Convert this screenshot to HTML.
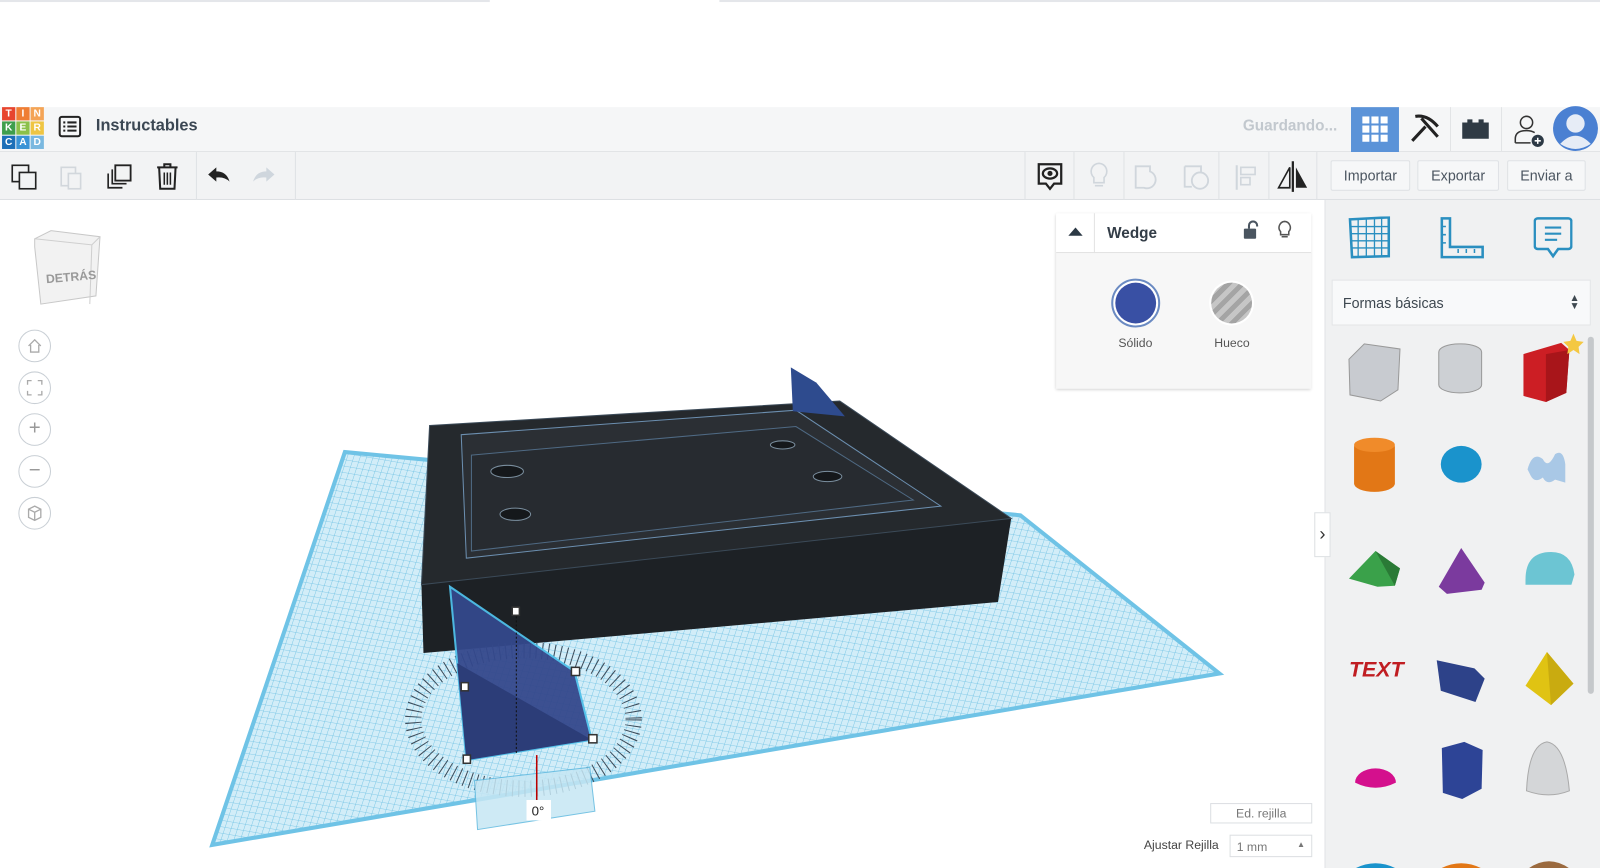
<!DOCTYPE html>
<html><head><meta charset="utf-8"><style>
*{margin:0;padding:0;box-sizing:border-box}
body{width:1600px;height:868px;overflow:hidden;background:#fff;font-family:"Liberation Sans",sans-serif}
#w{width:1568px;height:851px;position:relative;transform:scale(1.0204);transform-origin:0 0}
.a{position:absolute}
.hdr{left:0;top:105px;width:1568px;height:44px;background:#f5f6f7;border-bottom:1px solid #e2e4e6}
.tb{left:0;top:149px;width:1568px;height:47px;background:#f2f3f4;border-bottom:1px solid #dde0e3}
.btn{top:157px;height:30px;border:1px solid #dfe2e5;background:#f6f7f8;font-size:14px;color:#4b5560;text-align:center;line-height:28px;border-radius:2px}
.sep{width:1px;background:#dfe2e5;top:149px;height:47px}
.lg{width:13px;height:13px;color:#fff;font-size:10px;font-weight:bold;text-align:center;line-height:13px}
</style></head><body><div id="w">
<div class="a" style="left:0;top:0;width:480px;height:2px;background:#e4e6ea"></div>
<div class="a" style="left:705px;top:0;width:863px;height:2px;background:#e4e6ea"></div>
<div class="a hdr"></div>
<div class="a" style="left:2px;top:105px;display:grid;grid-template-columns:13px 13px 13px;gap:1px">
<div class="lg" style="background:#e7452e">T</div><div class="lg" style="background:#ef7e34">I</div><div class="lg" style="background:#f4a456">N</div>
<div class="lg" style="background:#3f9e4c">K</div><div class="lg" style="background:#8cc04a">E</div><div class="lg" style="background:#efc543">R</div>
<div class="lg" style="background:#1c6fb8">C</div><div class="lg" style="background:#3a93d6">A</div><div class="lg" style="background:#7ab8e0">D</div></div>
<svg class="a" style="left:57px;top:113px" width="24" height="22"><rect x="1.5" y="1.5" width="20" height="19" rx="2" fill="none" stroke="#222" stroke-width="2"/><path d="M5 7h2M9 7h9M5 11h2M9 11h9M5 15h2M9 15h9" stroke="#222" stroke-width="2"/></svg>
<div class="a" style="left:94px;top:115px;font-size:16px;font-weight:bold;color:#3b4753">Instructables</div>
<div class="a" style="left:1218px;top:115px;font-size:15px;color:#c2c8ce;font-weight:bold">Guardando...</div>
<div class="a" style="left:1324px;top:105px;width:47px;height:44px;background:#5b93d8"></div>
<svg class="a" style="left:1335px;top:114px" width="25" height="25"><g fill="#fff"><rect x="0" y="0" width="7" height="7"/><rect x="9" y="0" width="7" height="7"/><rect x="18" y="0" width="7" height="7"/><rect x="0" y="9" width="7" height="7"/><rect x="9" y="9" width="7" height="7"/><rect x="18" y="9" width="7" height="7"/><rect x="0" y="18" width="7" height="7"/><rect x="9" y="18" width="7" height="7"/><rect x="18" y="18" width="7" height="7"/></g></svg>
<svg class="a" style="left:1381px;top:110px" width="32" height="32"><path d="M6 4 Q18 2 28 14 M12 6 L28 24 M16 14 L3 28" stroke="#222" stroke-width="3" fill="none"/></svg>
<div class="a" style="left:1421px;top:105px;width:1px;height:44px;background:#e2e4e6"></div>
<svg class="a" style="left:1432px;top:115px" width="28" height="22"><path d="M1 5h5v-3h5v3h6v-3h5v3h5v16h-26z" fill="#2f3a44"/></svg>
<div class="a" style="left:1471px;top:105px;width:1px;height:44px;background:#e2e4e6"></div>
<svg class="a" style="left:1483px;top:110px" width="32" height="36"><circle cx="13" cy="10" r="6" fill="none" stroke="#333" stroke-width="1.5"/><path d="M2 30v-4q0-8 11-8 5 0 8 2" fill="none" stroke="#333" stroke-width="1.5"/><path d="M2 30h15" stroke="#333" stroke-width="1.5"/><circle cx="24" cy="28" r="6" fill="#2c3945"/><path d="M24 25v6M21 28h6" stroke="#fff" stroke-width="1.5"/></svg>
<svg class="a" style="left:1521px;top:103px" width="46" height="46"><circle cx="23" cy="23" r="22" fill="#4a80d2"/><circle cx="23" cy="18" r="9" fill="#e6ecf6"/><path d="M8 38q15-16 30 0q-15 10-30 0z" fill="#e6ecf6"/></svg>

<div class="a tb"></div>
<div class="a sep" style="left:192px"></div><div class="a sep" style="left:289px"></div>
<svg class="a" style="left:10px;top:160px" width="28" height="28"><rect x="2" y="2" width="16" height="16" fill="none" stroke="#222" stroke-width="1.6"/><rect x="9" y="9" width="16" height="16" fill="#f2f3f4" stroke="#222" stroke-width="1.6"/></svg>
<svg class="a" style="left:57px;top:160px" width="26" height="28"><rect x="3" y="4" width="14" height="18" fill="none" stroke="#d2d7dc" stroke-width="1.6"/><rect x="10" y="10" width="12" height="15" fill="#f2f3f4" stroke="#d2d7dc" stroke-width="1.6"/></svg>
<svg class="a" style="left:103px;top:160px" width="28" height="28"><rect x="10" y="2" width="15" height="15" fill="none" stroke="#222" stroke-width="1.8"/><path d="M7 6v14h14M3 10v14h14" fill="none" stroke="#222" stroke-width="1.6"/></svg>
<svg class="a" style="left:152px;top:158px" width="24" height="30"><path d="M2 6h20M9 6v-3h6v3M4 7l1 20h14l1-20" fill="none" stroke="#222" stroke-width="2"/><path d="M9 11v12M12 11v12M15 11v12" stroke="#222" stroke-width="1.5"/></svg>
<svg class="a" style="left:201px;top:162px" width="26" height="20"><path d="M3 9l8-7v4q10 0 13 10q-5-5-13-4v4z" fill="#222"/></svg>
<svg class="a" style="left:246px;top:162px" width="26" height="20"><path d="M23 9l-8-7v4q-10 0-13 10q5-5 13-4v4z" fill="#cfd6dd"/></svg>
<div class="a sep" style="left:1004px"></div><div class="a sep" style="left:1052px"></div><div class="a sep" style="left:1101px"></div><div class="a sep" style="left:1194px"></div><div class="a sep" style="left:1243px"></div><div class="a sep" style="left:1290px"></div>
<svg class="a" style="left:1015px;top:158px" width="28" height="32"><path d="M3 3h22v19h-7l-4 5-4-5h-7z" fill="none" stroke="#222" stroke-width="2.2"/><ellipse cx="14" cy="12" rx="7" ry="5" fill="none" stroke="#222" stroke-width="2.2"/><circle cx="14" cy="12" r="2.5" fill="#222"/></svg>
<svg class="a" style="left:1066px;top:158px" width="22" height="30"><path d="M11 2a8 8 0 0 0-5 14v5h10v-5a8 8 0 0 0-5-14zM7 24h8" fill="none" stroke="#d0d6dc" stroke-width="1.6"/></svg>
<svg class="a" style="left:1111px;top:160px" width="28" height="28"><path d="M2 3h14v5a8 8 0 1 1-6 16h-8z" fill="none" stroke="#d0d6dc" stroke-width="1.8"/></svg>
<svg class="a" style="left:1159px;top:160px" width="28" height="28"><path d="M2 3h16v6M2 3v20h7" fill="none" stroke="#d0d6dc" stroke-width="1.8"/><circle cx="17" cy="17" r="8" fill="none" stroke="#d0d6dc" stroke-width="1.8"/></svg>
<svg class="a" style="left:1210px;top:160px" width="24" height="28"><path d="M2 2v24" stroke="#d0d6dc" stroke-width="2"/><rect x="6" y="4" width="14" height="7" fill="none" stroke="#d0d6dc" stroke-width="1.6"/><rect x="6" y="14" width="9" height="7" fill="none" stroke="#d0d6dc" stroke-width="1.6"/></svg>
<svg class="a" style="left:1251px;top:157px" width="32" height="32"><path d="M16 1v30" stroke="#222" stroke-width="2.2"/><path d="M13 7v20h-11z" fill="none" stroke="#222" stroke-width="1.6"/><path d="M19 7v20h11z" fill="#222"/></svg>
<div class="a btn" style="left:1304px;width:78px">Importar</div>
<div class="a btn" style="left:1389px;width:80px">Exportar</div>
<div class="a btn" style="left:1477px;width:77px">Enviar a</div>

<!-- scene -->
<svg class="a" style="left:0;top:196px" width="1298" height="655" viewBox="0 196 1298 655">
<defs>
<pattern id="g" width="6" height="6" patternUnits="userSpaceOnUse" patternTransform="matrix(1,0.17,-0.33,1,0,0)"><rect width="6" height="6" fill="#d2edf8"/><path d="M0 0h6M0 0v6" stroke="#6cc0e3" stroke-width="0.8"/></pattern>
</defs>
<polygon points="338,443 1000,505 1195,660 208,828" fill="url(#g)" stroke="#6fc3e6" stroke-width="4"/>
<!-- box -->
<polygon points="413,573 991,508 978,590 415,640" fill="#1d2125"/>
<polygon points="421,417 823,393 991,508 413,573" fill="#25292d" stroke="#3b4a58"/>
<polygon points="452,426 780,402 922,496 457,547" fill="#2b2f34" stroke="#6c8fb0" stroke-width="1"/>
<polygon points="462,446 780,418 895,490 462,540" fill="#272b30" stroke="#4f6a84" stroke-width="1"/>
<ellipse cx="497" cy="462" rx="16" ry="6" fill="#15181b" stroke="#7a8e9e"/>
<ellipse cx="505" cy="504" rx="15" ry="6" fill="#15181b" stroke="#7a8e9e"/>
<ellipse cx="767" cy="436" rx="12" ry="4" fill="#15181b" stroke="#7a8e9e"/>
<ellipse cx="811" cy="467" rx="14" ry="5" fill="#15181b" stroke="#7a8e9e"/>
<polygon points="775,360 800,375 828,408 777,403" fill="#2e4b8e"/>
<!-- rotation ticks -->
<ellipse cx="513" cy="705" rx="108" ry="68" fill="none" stroke="#3d4c5a" stroke-width="16" stroke-dasharray="1 5"/>
<polygon points="465,765 578,752 583,795 468,813" fill="#c6e7f4" opacity="0.85" stroke="#5fb9df"/>
<!-- wedge -->
<polygon points="441,575 563,658 580,725 457,745" fill="#34488c" opacity="0.95" stroke="#4fc0ea" stroke-width="2"/>
<polygon points="448,650 580,725 457,745" fill="#2c3d78"/>
<path d="M506 600V740" stroke="#111" stroke-dasharray="2 2"/>
<path d="M526 740v45" stroke="#b00" stroke-width="1.5"/>
<g fill="#fff" stroke="#333" stroke-width="1.5"><rect x="502" y="595" width="7" height="8"/><rect x="560" y="654" width="8" height="8"/><rect x="452" y="669" width="7" height="8"/><rect x="577" y="720" width="8" height="8"/><rect x="454" y="740" width="7" height="8"/></g>
<rect x="516" y="784" width="24" height="20" fill="#fff"/>
<text x="521" y="799" font-family="Liberation Sans" font-size="13" fill="#222">0°</text>
</svg>

<!-- view cube -->
<svg class="a" style="left:28px;top:222px" width="76" height="82"><polygon points="6,12 22,4 70,10 66,68 12,76 6,20" fill="#f2f2f2" stroke="#c8c8c8"/><path d="M6 12l56 6l8-8M62 18l-2 58" fill="none" stroke="#cfcfcf"/><text x="17" y="54" font-family="Liberation Sans" font-size="12" font-weight="bold" fill="#999" transform="rotate(-5 35 50)">DETRÁS</text></svg>
<div class="a" style="left:18px;top:323px;width:32px;height:32px;border:1px solid #c9cfd5;border-radius:50%;background:#fff"></div>
<div class="a" style="left:18px;top:364px;width:32px;height:32px;border:1px solid #c9cfd5;border-radius:50%;background:#fff"></div>
<div class="a" style="left:18px;top:405px;width:32px;height:32px;border:1px solid #c9cfd5;border-radius:50%;background:#fff;text-align:center;line-height:29px;color:#999;font-size:20px">+</div>
<div class="a" style="left:18px;top:446px;width:32px;height:32px;border:1px solid #c9cfd5;border-radius:50%;background:#fff;text-align:center;line-height:28px;color:#999;font-size:20px">−</div>
<div class="a" style="left:18px;top:487px;width:32px;height:32px;border:1px solid #c9cfd5;border-radius:50%;background:#fff"></div>
<svg class="a" style="left:26px;top:331px" width="16" height="16"><path d="M2 8l6-6 6 6M4 7v7h8v-7" fill="none" stroke="#aaa" stroke-width="1.3"/></svg>
<svg class="a" style="left:26px;top:372px" width="16" height="16"><path d="M1 5V1h4M11 1h4v4M15 11v4h-4M5 15H1v-4" fill="none" stroke="#aaa" stroke-width="1.3"/></svg>
<svg class="a" style="left:26px;top:495px" width="16" height="16"><path d="M8 1l6 3v8l-6 3-6-3V4zM2 4l6 3 6-3M8 7v8" fill="none" stroke="#aaa" stroke-width="1.3"/></svg>

<!-- wedge panel -->
<div class="a" style="left:1035px;top:209px;width:250px;height:172px;background:#f7f7f7;box-shadow:0 1px 3px rgba(0,0,0,.2)"></div>
<div class="a" style="left:1035px;top:209px;width:250px;height:39px;background:#fff;border-bottom:1px solid #e2e2e2"></div>
<div class="a" style="left:1072px;top:209px;width:1px;height:39px;background:#e2e2e2"></div>
<svg class="a" style="left:1046px;top:222px" width="16" height="10"><path d="M1 9l7-8 7 8z" fill="#2c3945"/></svg>
<div class="a" style="left:1085px;top:220px;font-size:15px;font-weight:bold;color:#333d47">Wedge</div>
<svg class="a" style="left:1218px;top:216px" width="16" height="20"><path d="M6 8V5a4 4 0 0 1 8 0v1" fill="none" stroke="#4a5560" stroke-width="2"/><rect x="1" y="8" width="12" height="10" rx="1" fill="#4a5560"/></svg>
<svg class="a" style="left:1251px;top:216px" width="16" height="20"><path d="M8 1a6 6 0 0 0-4 10v3h8v-3a6 6 0 0 0-4-10zM5 16h6" fill="none" stroke="#555" stroke-width="1.5"/></svg>
<div class="a" style="left:1089px;top:273px;width:48px;height:48px;border-radius:50%;border:2px solid #6a8ac2;background:#fff"></div>
<div class="a" style="left:1093px;top:277px;width:40px;height:40px;border-radius:50%;background:#3950a4"></div>
<div class="a" style="left:1185px;top:275px;width:44px;height:44px;border-radius:50%;background:#fff"></div>
<div class="a" style="left:1187px;top:277px;width:40px;height:40px;border-radius:50%;background:repeating-linear-gradient(135deg,#a4a4a4 0 5px,#c6c6c6 5px 10px)"></div>
<div class="a" style="left:1096px;top:329px;font-size:12px;color:#555">Sólido</div>
<div class="a" style="left:1190px;top:329px;font-size:12px;color:#555">Hueco</div>

<div class="a" style="left:1186px;top:787px;width:100px;height:20px;border:1px solid #dcdfe2;background:#fff;font-size:12px;color:#777;text-align:center;line-height:18px">Ed. rejilla</div>
<div class="a" style="left:1121px;top:821px;font-size:12px;color:#444">Ajustar Rejilla</div>
<div class="a" style="left:1205px;top:818px;width:81px;height:22px;border:1px solid #dcdfe2;background:#fff;font-size:12px;color:#777;padding:4px 6px">1 mm<span style="float:right;font-size:8px">▲</span></div>

<!-- right panel -->
<div class="a" style="left:1298px;top:196px;width:270px;height:655px;background:#f0f1f2;border-left:1px solid #e1e3e5"></div>
<div class="a" style="left:1288px;top:502px;width:16px;height:44px;background:#fff;border:1px solid #dde0e3;font-size:18px;line-height:40px;text-align:center;color:#333">›</div>
<svg class="a" style="left:1321px;top:212px" width="42" height="42"><path d="M2 3l38-2v38l-36 1z" fill="none" stroke="#2a8fc0" stroke-width="2.5"/><path d="M10 3v37M18 2v38M26 2v38M33 1v38M3 10h37M3 17h37M3 24h37M3 31h37" stroke="#2a8fc0" stroke-width="1.3"/></svg>
<svg class="a" style="left:1411px;top:212px" width="44" height="42"><path d="M2 2h8v28h32v10h-40z" fill="none" stroke="#2a8fc0" stroke-width="2.5"/><path d="M2 10h4M2 18h4M2 26h4M18 36v-4M26 36v-4M34 36v-4" stroke="#2a8fc0" stroke-width="1.5"/></svg>
<svg class="a" style="left:1503px;top:212px" width="38" height="42"><path d="M4 2h30a3 3 0 0 1 3 3v24a3 3 0 0 1-3 3h-10l-5 7-5-7h-10a3 3 0 0 1-3-3v-24a3 3 0 0 1 3-3z" fill="none" stroke="#2a8fc0" stroke-width="2.5"/><path d="M11 11h16M11 17h16M11 23h12" stroke="#2a8fc0" stroke-width="2"/></svg>
<div class="a" style="left:1305px;top:274px;width:254px;height:45px;background:#f8f9fa;border:1px solid #e3e5e7;font-size:14px;color:#3e4850;padding:14px 10px">Formas básicas<span style="float:right;font-size:10px;line-height:8px">▲<br>▼</span></div>
<div class="a" style="left:1556px;top:330px;width:6px;height:350px;background:#c5c8cb;border-radius:3px"></div>
<svg class="a" style="left:1310px;top:325px" width="250" height="526">
<polygon points="12,27 27,12 62,17 60,57 43,68 13,62" fill="#c8cbd0" stroke="#999"/>
<rect x="100" y="12" width="42" height="48" rx="20" ry="8" fill="#cdd0d4" stroke="#999"/>
<polygon points="183,22 220,11 228,18 225,60 205,69 183,63" fill="#cc1e24"/><polygon points="205,22 228,18 225,60 205,69" fill="#a8151a"/>
<path d="M232 2l3 7 7 1-5 5 1 7-6-4-6 4 1-7-5-5 7-1z" fill="#f4c842"/>
<rect x="17" y="105" width="40" height="52" rx="20" ry="8" fill="#e27716"/><ellipse cx="37" cy="111" rx="20" ry="7" fill="#f08b2a"/>
<ellipse cx="122" cy="130" rx="20" ry="18" fill="#1a93cc"/>
<path d="M187 135q5-18 15-10q5 10 12-5q8-5 10 10v18l-10-3q-8 6-12-2q-8 6-12-2z" fill="#a9c8e6"/>
<polygon points="12,242 38,215 62,232 57,249 40,250" fill="#3aa14a"/><polygon points="38,215 62,232 57,249" fill="#2a7a36"/>
<polygon points="122,212 100,250 108,257 142,253 145,246" fill="#7b3a9e"/>
<path d="M185 243q0-27 25-27q20 0 23 22l-3 10-45 0z" fill="#6cc5d3"/>
<text x="12" y="338" font-family="Liberation Sans" font-size="21" font-weight="bold" font-style="italic" fill="#c01d22">TEXT</text>
<polygon points="98,322 135,330 145,340 136,363 102,352" fill="#2d4289"/>
<polygon points="185,347 206,314 232,345 210,366" fill="#e0c313"/><polygon points="206,314 232,345 210,366" fill="#c9ab10"/>
<path d="M18 442a20 14 0 0 1 40 0q-20 10-40 0z" fill="#d4108d"/>
<polygon points="103,408 125,402 143,410 142,448 123,458 104,452" fill="#2d4496"/>
<path d="M186 450q2-45 20-48q18 3 22 48q-20 8-42 0z" fill="#d4d6d8" stroke="#aaa"/>
<path d="M18 526q20-10 40 0z" fill="#1a93cc"/><path d="M102 526q20-10 40 0z" fill="#e27716"/><path d="M188 526q20-14 40 0z" fill="#9b6a3f"/>
</svg>
</div></body></html>
